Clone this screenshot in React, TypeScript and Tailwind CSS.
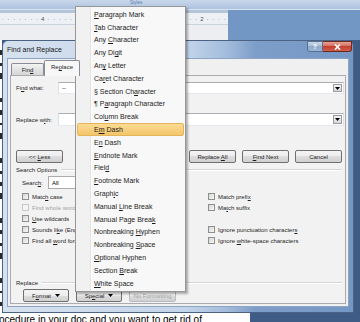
import React from 'react';

type Item = [string, number];

const specials: Item[] = [
  ['Paragraph Mark', 0],
  ['Tab Character', 0],
  ['Any Character', 4],
  ['Any Digit', 6],
  ['Any Letter', 2],
  ['Caret Character', 2],
  ['§ Section Character', 12],
  ['¶ Paragraph Character', 3],
  ['Column Break', 3],
  ['Em Dash', 1],
  ['En Dash', 1],
  ['Endnote Mark', 0],
  ['Field', 4],
  ['Footnote Mark', 0],
  ['Graphic', 5],
  ['Manual Line Break', 7],
  ['Manual Page Break', 16],
  ['Nonbreaking Hyphen', 12],
  ['Nonbreaking Space', 12],
  ['Optional Hyphen', 0],
  ['Section Break', 8],
  ['White Space', 0]
];

// bits of document text peeking out left of the dialog
const edgeMarks = [5, 3, 6, 0, 4, 5, 2, 6, 0, 5, 3, 4, 6, 0, 5, 4, 3, 6, 0, 5, 2, 4];

// underline the access key letter
function Key({ text, u }: { text: string; u?: number }) {
  if (u === undefined || u < 0) return <>{text}</>;
  return (
    <>
      {text.slice(0, u)}
      <span className="underline underline-offset-[1px]">{text[u]}</span>
      {text.slice(u + 1)}
    </>
  );
}

function Arrow({ color = '#000' }: { color?: string }) {
  return (
    <svg width="5" height="3" viewBox="0 0 5 3">
      <path d="M0 0h5L2.5 3z" fill={color} />
    </svg>
  );
}

function Btn({ children, className = '' }: { children: React.ReactNode; className?: string }) {
  return (
    <div
      className={`h-[13px] flex items-center justify-center gap-[4px] rounded-[2px] border border-[#707070] bg-[linear-gradient(#f4f4f4,#ececec_50%,#dedede_50%,#d0d0d0)] text-[6px] leading-none text-[#1e1e1e] ${className}`}
    >
      {children}
    </div>
  );
}

function Check({ dim = false }: { dim?: boolean }) {
  return (
    <span
      className={`w-[7px] h-[7px] shrink-0 border ${
        dim ? 'border-[#c9c9c9] bg-[#f4f4f4]' : 'border-[#8e8f8f] bg-[linear-gradient(135deg,#d6d6d6,#f8f8f8)]'
      }`}
    />
  );
}

function CheckRow({ label, u, dim = false, clip = false }: { label: string; u?: number; dim?: boolean; clip?: boolean }) {
  return (
    <div className="h-[11px] flex items-center gap-[3px] whitespace-nowrap">
      <Check dim={dim} />
      <span
        className={`text-[6px] leading-[8px] ${clip ? 'max-w-[43px] overflow-hidden' : ''} ${
          dim ? 'text-[#a3a3a3]' : 'text-[#1e1e1e]'
        }`}
      >
        <Key text={label} u={u} />
      </span>
    </div>
  );
}

function ComboInput({ value }: { value: string }) {
  return (
    <div className="flex-1 h-full flex items-stretch bg-white border border-[#abadb3] border-b-[#e3e9ef] border-x-[#dbdfe6]">
      <span className="flex-1 pl-[3px] text-[6px] leading-[11px] text-black">{value}</span>
      <div className="w-[9px] my-[1px] mr-[1px] flex items-center justify-center border border-[#9a9a9a] bg-[linear-gradient(#f4f4f4,#d8d8d8)]">
        <Arrow />
      </div>
    </div>
  );
}

function WordBackground() {
  // ruler cells, the ones under the menu left blank
  const ticks = Array.from({ length: 40 }, (_, i) =>
    i >= 13 && i <= 32 ? '' : i === 7 ? '4' : i === 35 ? '2' : '·'
  );
  return (
    <div className="flex flex-col h-full">
      <div className="h-[10px] flex bg-[linear-gradient(#c9d7ea,#adc3df)] border-b border-[#d9e3f0]">
        <span className="ml-[130px] mt-[1px] text-[4.5px] leading-none text-[#5a7aa8]">Styles</span>
      </div>
      <div className="h-[30px] flex">
        <div className="w-[228px] flex flex-col">
          <div className="h-[3px] bg-[#b4c4d9]" />
          <div className="h-[11px] flex items-center bg-[#edf1f6] text-[6px] text-[#505050]">
            {ticks.map((t, i) => (
              <span key={i} className="w-[5.7px] shrink-0 text-center leading-none">
                {t}
              </span>
            ))}
          </div>
          <div className="flex-1 bg-[#eceef2] border-t border-[#c9d2de]" />
        </div>
        <div className="flex-1 bg-[#7397c5]" />
      </div>
      <div className="flex-1 flex">
        <div className="w-[2px] bg-white flex flex-col pt-[6px]">
          {edgeMarks.map((h, i) => (
            <div key={i} className="h-[12px] flex items-center">
              {h > 0 && <div className="w-[2px] bg-[#2a2a2a]" style={{ height: h }} />}
            </div>
          ))}
        </div>
        <div className="flex-1 bg-[#3f5c86]" />
      </div>
      <div className="h-[9px] flex">
        <div className="w-[250px] bg-white overflow-hidden">
          <div className="ml-[-1px] mt-[1px] text-[10px] leading-[12px] text-black whitespace-nowrap">
            ocedure in your doc and you want to get rid of
          </div>
        </div>
        <div className="flex-1 bg-[#3f5c86]" />
      </div>
    </div>
  );
}

function FindReplaceDialog() {
  return (
    <div className="absolute left-[2px] top-[40px] w-[352px] h-[273px] flex flex-col rounded-t-[6px] border border-[#4b6283] bg-[linear-gradient(90deg,#d6e1ee_0%,#c3d5ea_52%,#a3bcdc_64%,#7d9ec9_72%,#7597c4_100%)]">
      {/* title bar */}
      <div className="h-[17px] flex items-center">
        <span className="ml-[4px] text-[7px] leading-none text-[#1a1a1a]">Find and Replace</span>
        <div className="ml-auto mr-[1px] self-start flex">
          <div className="w-[16px] h-[11px] flex items-center justify-center rounded-bl-[3px] border border-[#56708f] bg-[linear-gradient(#c9d8ea,#a5bbd6_50%,#8ea9cc_50%,#9bb6d8)] text-[7px] font-bold leading-none text-white">
            ?
          </div>
          <div className="w-[29px] h-[11px] flex items-center justify-center rounded-br-[3px] border border-l-0 border-[#6d2a22] bg-[linear-gradient(#e8a195,#d46b5c_50%,#c3402f_50%,#d0604d)]">
            <svg width="7" height="6" viewBox="0 0 7 6">
              <path d="M1 0.5l5 5M6 0.5l-5 5" stroke="#fff" strokeWidth="1.6" />
            </svg>
          </div>
        </div>
      </div>

      {/* body */}
      <div className="mx-[4px] h-[249px] flex flex-col border border-[#8da4c3] bg-[#f0f0f0] px-[2px] pt-[1px]">
        {/* tabs */}
        <div className="h-[15px] flex items-end pl-[1px]">
          <div className="w-[33px] h-[12px] flex items-center justify-center rounded-t-[2px] border border-b-0 border-[#898c95] bg-[linear-gradient(#f3f3f3,#e3e3e3_50%,#d7d7d7)] text-[6px] leading-none text-[#1e1e1e]">
            <Key text="Find" u={3} />
          </div>
          <div className="relative z-10 w-[36px] h-[16px] mb-[-1px] flex items-center justify-center rounded-t-[2px] border border-b-0 border-[#898c95] bg-[#f7f7f7] pb-[3px] text-[6px] leading-none text-[#1e1e1e]">
            <Key text="Replace" u={2} />
          </div>
        </div>

        {/* tab page */}
        <div className="h-[229px] flex flex-col border border-[#a9abb0] bg-[#f2f2f2] pl-[5px] pr-[1px]">
          <div className="mt-[6px] h-[12px] flex items-center">
            <span className="w-[42px] text-[6px] leading-none text-[#1e1e1e]">
              <Key text="Find what:" u={2} />
            </span>
            <ComboInput value="--" />
          </div>

          <div className="mt-[19px] h-[13px] flex items-center">
            <span className="w-[42px] text-[6px] leading-none text-[#1e1e1e] whitespace-nowrap">
              <Key text="Replace with:" u={9} />
            </span>
            <ComboInput value="" />
          </div>

          <div className="mt-[24px] flex pr-[2px]">
            <Btn className="w-[47px]">
              <span>
                {'<< '}
                <Key text="Less" u={0} />
              </span>
            </Btn>
            <div className="ml-auto flex gap-[6px]">
              <Btn className="w-[47px]">
                <span>
                  <Key text="Replace All" u={8} />
                </span>
              </Btn>
              <Btn className="w-[47px]">
                <span>
                  <Key text="Find Next" u={0} />
                </span>
              </Btn>
              <Btn className="w-[47px]">
                <span>Cancel</span>
              </Btn>
            </div>
          </div>

          <div className="mt-[3px] h-[7px] flex items-center pr-[2px]">
            <span className="text-[6px] leading-none text-[#1e1e1e] whitespace-nowrap">Search Options</span>
            <div className="flex-1 ml-[4px] h-[2px] border-t border-[#d5d5d5] border-b border-b-white" />
          </div>

          <div className="mt-[3px] h-[13px] flex items-center pl-[6px]">
            <span className="w-[26px] text-[6px] leading-none text-[#1e1e1e]">
              <Key text="Search:" u={5} />
            </span>
            <div className="w-[70px] h-full flex items-center border border-[#acacac] bg-white pl-[3px] text-[6px] leading-none text-black">
              All
            </div>
          </div>

          <div className="mt-[2px] grid grid-cols-[186px_1fr] pl-[6px]">
            <CheckRow label="Match case" u={4} clip />
            <CheckRow label="Match prefix" u={11} />
            <CheckRow label="Find whole words only" dim clip />
            <CheckRow label="Match suffix" u={2} />
            <CheckRow label="Use wildcards" u={0} clip />
            <div className="h-[11px]" />
            <CheckRow label="Sounds like (English)" u={9} clip />
            <CheckRow label="Ignore punctuation characters" u={28} />
            <CheckRow label="Find all word forms (English)" u={9} clip />
            <CheckRow label="Ignore white-space characters" u={7} />
          </div>

          <div className="mt-[33px] h-[7px] flex items-center pr-[2px]">
            <span className="text-[6px] leading-none text-[#1e1e1e]">Replace</span>
            <div className="flex-1 ml-[4px] h-[2px] border-t border-[#d5d5d5] border-b border-b-white" />
          </div>

          <div className="mt-[3px] flex pl-[7px]">
            <Btn className="w-[46px]">
              <span>
                <Key text="Format" u={1} />
              </span>
              <Arrow />
            </Btn>
            <Btn className="w-[46px] ml-[7px] border-[#2c628b] bg-[linear-gradient(#c4e2f7,#97cbef_50%,#6fb2e3_50%,#7ab8e6)]">
              <span>
                <Key text="Special" u={2} />
              </span>
              <Arrow />
            </Btn>
            <Btn className="w-[47px] ml-[7px] border-[#b8bcbf] bg-[#f4f4f4] text-[#a6a6a6]">
              <span>No Formatting</span>
            </Btn>
          </div>
        </div>
      </div>
    </div>
  );
}

function SpecialMenu() {
  return (
    <div className="absolute left-[75px] top-[6px] w-[111px] border border-[#979797] bg-[linear-gradient(90deg,#f1f1f1_0px,#f1f1f1_14px,#e2e3e3_14px,#e2e3e3_15px,#ffffff_15px,#ffffff_16px,#f8f8f8_16px)] py-[1px] shadow-[2px_2px_2px_rgba(0,0,0,0.3)]">
      {specials.map(([text, u]) => {
        const active = text === 'Em Dash';
        return (
          <div
            key={text}
            className={`h-[12.8px] mx-[1px] flex items-center pl-[16px] rounded-[2px] border text-[7px] leading-none text-[#1b1b1b] whitespace-nowrap ${
              active ? 'border-[#e2b45c] bg-[linear-gradient(#fbdc94,#f4c56a)]' : 'border-transparent'
            }`}
          >
            <span>
              <Key text={text} u={u} />
            </span>
          </div>
        );
      })}
    </div>
  );
}

export default function App() {
  return (
    <div className="relative w-[360px] h-[322px] overflow-hidden bg-[#3f5c86] font-['Liberation_Sans',Arial,sans-serif]">
      <WordBackground />
      <FindReplaceDialog />
      <SpecialMenu />
    </div>
  );
}
